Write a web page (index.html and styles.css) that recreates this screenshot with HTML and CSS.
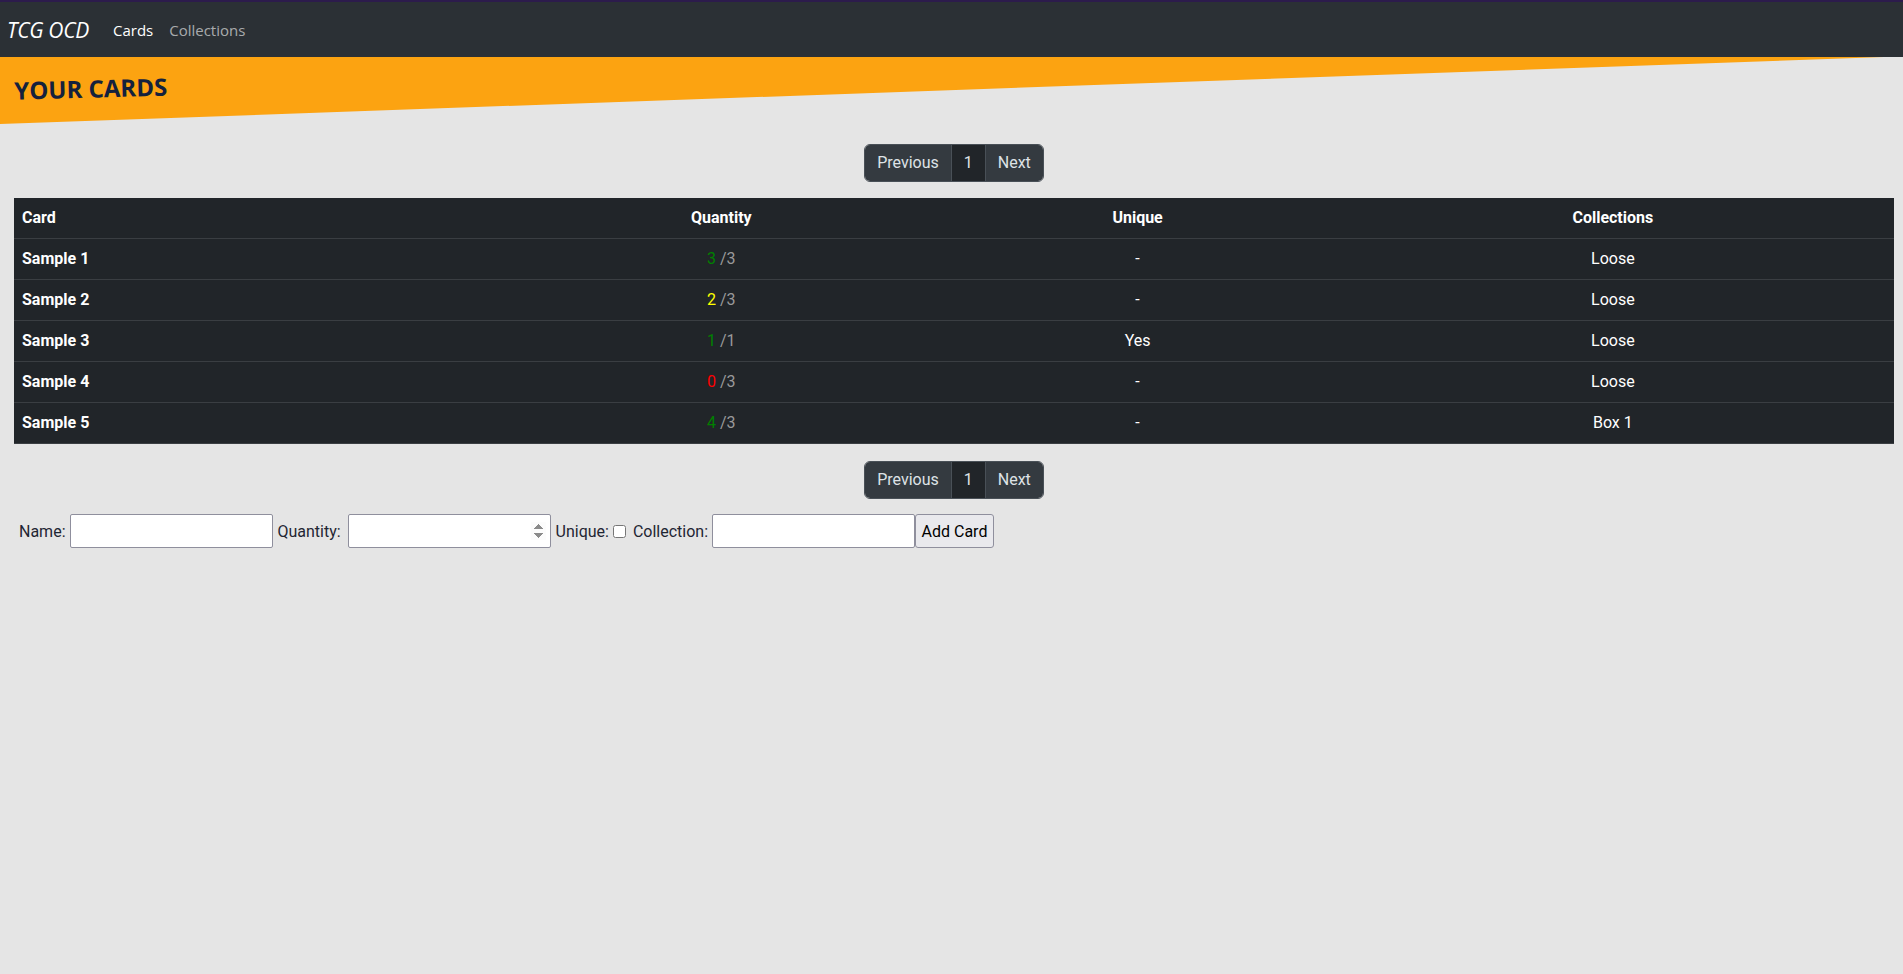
FILE: index.html
```html
<!DOCTYPE html>
<html lang="en">
<head>
<meta charset="utf-8">
<title>TCG OCD - Cards</title>
<link rel="stylesheet" href="styles.css">
</head>
<body>
<nav class="navbar">
  <a class="brand" href="#">TCG OCD</a>
  <a class="nav-link active" href="#">Cards</a>
  <a class="nav-link" href="#">Collections</a>
</nav>
<header class="banner">
  <h1 class="banner-title">YOUR CARDS</h1>
</header>
<main class="content">
  <div class="pager-row">
    <ul class="pagination">
      <li class="page-item"><a class="page-link" href="#">Previous</a></li>
      <li class="page-item active"><a class="page-link" href="#">1</a></li>
      <li class="page-item"><a class="page-link" href="#">Next</a></li>
    </ul>
  </div>
  <table class="cards">
    <colgroup>
      <col class="col-card">
      <col class="col-qty">
      <col class="col-unique">
      <col class="col-coll">
    </colgroup>
    <thead>
      <tr>
        <th class="cell-left">Card</th>
        <th>Quantity</th>
        <th>Unique</th>
        <th>Collections</th>
      </tr>
    </thead>
    <tbody>
      <tr>
        <th class="cell-left">Sample 1</th>
        <td><span class="q-ok">3</span> <span class="q-max">/3</span></td>
        <td>-</td>
        <td>Loose</td>
      </tr>
      <tr>
        <th class="cell-left">Sample 2</th>
        <td><span class="q-partial">2</span> <span class="q-max">/3</span></td>
        <td>-</td>
        <td>Loose</td>
      </tr>
      <tr>
        <th class="cell-left">Sample 3</th>
        <td><span class="q-ok">1</span> <span class="q-max">/1</span></td>
        <td>Yes</td>
        <td>Loose</td>
      </tr>
      <tr>
        <th class="cell-left">Sample 4</th>
        <td><span class="q-none">0</span> <span class="q-max">/3</span></td>
        <td>-</td>
        <td>Loose</td>
      </tr>
      <tr>
        <th class="cell-left">Sample 5</th>
        <td><span class="q-ok">4</span> <span class="q-max">/3</span></td>
        <td>-</td>
        <td>Box 1</td>
      </tr>
    </tbody>
  </table>
  <div class="pager-row">
    <ul class="pagination">
      <li class="page-item"><a class="page-link" href="#">Previous</a></li>
      <li class="page-item active"><a class="page-link" href="#">1</a></li>
      <li class="page-item"><a class="page-link" href="#">Next</a></li>
    </ul>
  </div>
  <form class="add-form">
    <label class="lbl-name" for="name">Name:</label>
    <input class="field" type="text" id="name">
    <label class="lbl-qty" for="qty">Quantity:</label>
    <input class="field field-num" type="number" id="qty">
    <label for="uniq">Unique:</label>
    <input class="check" type="checkbox" id="uniq">
    <label for="coll">Collection:</label>
    <input class="field" type="text" id="coll"><button class="add-btn" type="button">Add Card</button>
  </form>
</main>
</body>
</html>
```

FILE: styles.css
```css
html, body {
  margin: 0;
  padding: 0;
}

body {
  background: #e5e5e5;
  font-family: Roboto, "Liberation Sans", sans-serif;
  font-size: 16px;
  color: #1f2633;
  min-height: 974px;
}

a {
  text-decoration: none;
}

/* Navbar */
.navbar {
  display: flex;
  align-items: center;
  height: 57px;
  box-sizing: border-box;
  border-top: 2px solid #2c1b4c;
  background: #2b3035;
  padding: 0 7px;
  font-family: "Open Sans", "Noto Sans", sans-serif;
}

.brand {
  font-style: italic;
  font-size: 21px;
  color: #ffffff;
  margin-right: 16px;
  letter-spacing: -0.3px;
}

.nav-link {
  font-size: 15px;
  padding: 0 8px;
  color: rgba(255, 255, 255, 0.6);
}

.nav-link.active {
  color: #ffffff;
}

/* Banner */
.banner {
  height: 67px;
  background: #fca311;
  clip-path: polygon(0 0, 100% 0, 99% 0, 0 100%);
}

.banner-title {
  margin: 0;
  padding: 18px 0 0 14px;
  line-height: 32px;
  font-family: "Open Sans", "Noto Sans", sans-serif;
  font-weight: 700;
  font-size: 24px;
  color: #14213d;
  transform: rotate(-1.5deg);
  transform-origin: left center;
}

/* Main */
.content {
  padding: 20px 9px 0 14px;
}

.pager-row {
  display: flex;
  justify-content: center;
}

.pagination {
  display: flex;
  list-style: none;
  margin: 0;
  padding: 0;
  border-radius: 6px;
  overflow: hidden;
  border: 1px solid #495057;
}

.page-item + .page-item .page-link {
  border-left: 1px solid #495057;
}

.page-link {
  display: block;
  padding: 6px 12px;
  line-height: 24px;
  background: #343a40;
  color: #dee2e6;
  font-size: 16px;
}

.page-item.active .page-link {
  background: #212529;
}

/* Table */
.cards {
  width: 100%;
  border-collapse: collapse;
  table-layout: fixed;
  background: #212529;
  color: #ffffff;
  margin: 16px 0 17px;
}

.col-card { width: 25.81%; }
.col-qty { width: 23.63%; }
.col-unique { width: 20.65%; }
.col-coll { width: 29.91%; }

.cards th,
.cards td {
  padding: 8px;
  line-height: 24px;
  border-bottom: 1px solid #3a3e42;
  text-align: center;
}

.cards th {
  font-weight: 700;
}

.cards .cell-left {
  text-align: left;
}

.q-ok { color: #008000; }
.q-partial { color: #ffff00; }
.q-none { color: #ff0000; }
.q-max { color: #9a9a9a; }

/* Form */
.add-form {
  margin-top: 15px;
  padding-left: 5px;
  font-size: 16px;
}

.add-form label {
  vertical-align: middle;
}

.add-form .lbl-name {
  margin-right: 1px;
}

.add-form .lbl-qty {
  margin-right: 3px;
}

.field {
  box-sizing: border-box;
  width: 203px;
  height: 34px;
  border: 1px solid #8f8f9d;
  border-radius: 2px;
  background: #ffffff;
  font-family: Roboto, sans-serif;
  font-size: 16px;
  padding: 2px 4px;
  vertical-align: middle;
}

.field-num {
  margin-right: 1px;
}

.field-num::-webkit-inner-spin-button {
  opacity: 1;
}

.check {
  width: 13px;
  height: 13px;
  margin: 0 3px 0 0;
  vertical-align: middle;
}

.add-btn {
  box-sizing: border-box;
  height: 34px;
  width: 79px;
  border: 1px solid #8f8f9d;
  border-radius: 3px;
  background: #e9e9ed;
  font-family: Roboto, sans-serif;
  font-size: 16px;
  color: #000000;
  padding: 0;
  vertical-align: middle;
}
```
